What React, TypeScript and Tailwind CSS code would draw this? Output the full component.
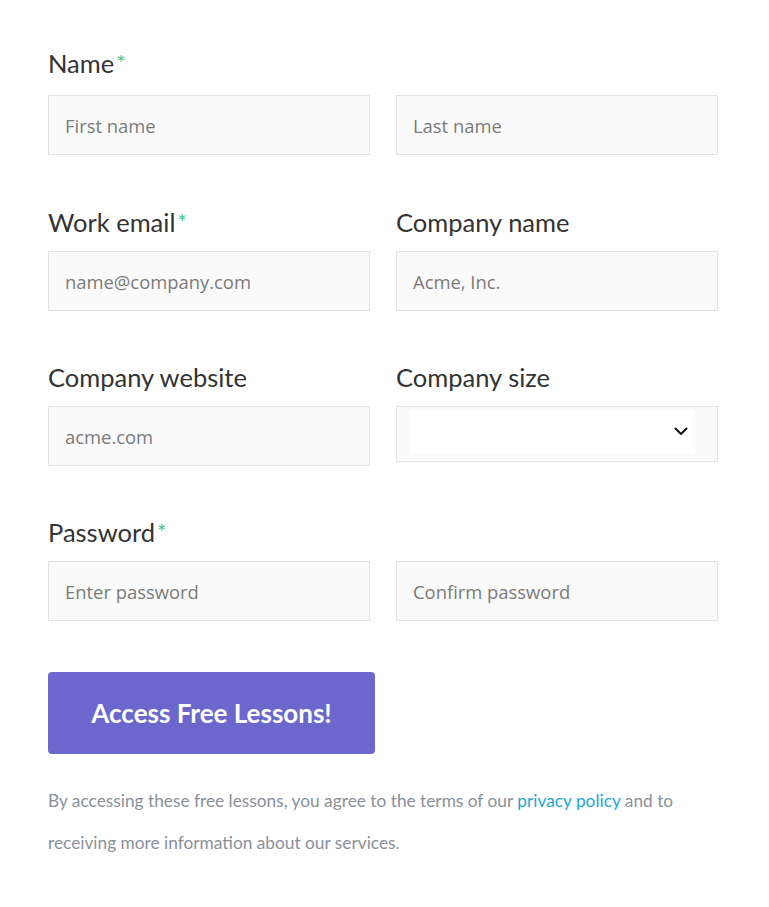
import React from "react";

const labelClass = "flex h-9 items-center font-['Lato',sans-serif] text-[25.5px] leading-9 text-[#333333]";
const inputClass =
  "h-[60px] w-full border border-[#e3e3e3] bg-[#fafafa] px-4 font-['Open_Sans',sans-serif] text-[18.4px] text-[#333] placeholder:text-[#7a7a7a] outline-none";

function Label({ text, required = false }: { text: string; required?: boolean }) {
  return (
    <label className={labelClass}>
      {text}
      {required && <span className="ml-[2px] text-[22px] text-[#3cc98f]">*</span>}
    </label>
  );
}

function Input({ placeholder, type = "text" }: { placeholder: string; type?: string }) {
  return <input type={type} placeholder={placeholder} className={inputClass} />;
}

export default function App() {
  return (
    <div className="min-h-[907px] bg-white font-['Lato','Open_Sans',sans-serif]">
      <form className="w-[718px] pl-12 pt-[45px]">
        <Label text="Name" required />
        <div className="mt-[14px] grid grid-cols-2 gap-x-[26px]">
          <Input placeholder="First name" />
          <Input placeholder="Last name" />
        </div>

        <div className="mt-[49px] grid grid-cols-2 gap-x-[26px]">
          <div>
            <Label text="Work email" required />
            <div className="mt-[11px]">
              <Input placeholder="name@company.com" type="email" />
            </div>
          </div>
          <div>
            <Label text="Company name" />
            <div className="mt-[11px]">
              <Input placeholder="Acme, Inc." />
            </div>
          </div>
        </div>

        <div className="mt-[48px] grid grid-cols-2 gap-x-[26px]">
          <div>
            <Label text="Company website" />
            <div className="mt-[11px]">
              <Input placeholder="acme.com" />
            </div>
          </div>
          <div>
            <Label text="Company size" />
            <div className="mt-[11px] h-[56px] border border-[#e3e3e3] bg-[#fafafa] pb-2 pl-[13px] pr-[22px] pt-[3px]">
              <div className="flex h-[43px] items-center justify-end bg-white pr-[7px]">
                <svg width="14" height="9" viewBox="0 0 14 9" fill="none">
                  <path d="M1.5 1.5L7 7L12.5 1.5" stroke="#111" strokeWidth="2" strokeLinecap="round" strokeLinejoin="round" />
                </svg>
              </div>
            </div>
          </div>
        </div>

        <div className="mt-[48px]">
          <Label text="Password" required />
          <div className="mt-[11px] grid grid-cols-2 gap-x-[26px]">
            <Input placeholder="Enter password" type="password" />
            <Input placeholder="Confirm password" type="password" />
          </div>
        </div>

        <button
          type="submit"
          className="mt-[51px] flex h-[82px] w-[327px] items-center justify-center rounded-[4px] bg-[#6b67cd] text-[26px] font-bold text-white"
        >
          Access Free Lessons!
        </button>

        <p className="mt-[26px] w-[670px] text-[17.3px] leading-[42px] text-[#8a9099]">
          By accessing these free lessons, you agree to the terms of our{" "}
          <a href="#" className="text-[#1ea7cf]">
            privacy policy
          </a>{" "}
          and to receiving more information about our services.
        </p>
      </form>
    </div>
  );
}
